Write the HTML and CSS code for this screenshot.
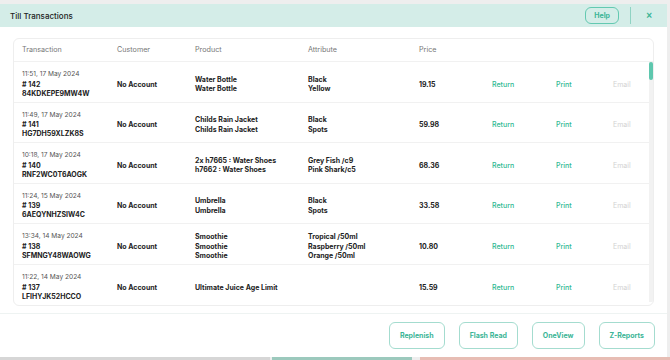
FILE: index.html
```html
<!DOCTYPE html>
<html lang="en">
<head>
    <meta charset="UTF-8">
    <meta name="viewport" content="width=device-width, initial-scale=1.0">
    <title>Till Transactions</title>
    <link rel="stylesheet" href="styles.css">
</head>
<body>
    <div class="modal">
        <header class="modal-header">
            <h1>Till Transactions</h1>
            <div class="header-actions">
                <button class="help-btn">Help</button>
                <span class="divider"></span>
                <button class="close-btn">&times;</button>
            </div>
        </header>

        <div class="modal-body">
            <div class="card">
                <div class="row head">
                    <div>Transaction</div>
                    <div>Customer</div>
                    <div>Product</div>
                    <div>Attribute</div>
                    <div>Price</div>
                    <div></div><div></div><div></div>
                </div>
                <div class="card-body">
                    <div class="rows">
                        <div class="row">
                            <div class="tx"><span class="date">11:51, 17 May 2024</span><b># 142</b><b>84KDKEPE9MW4W</b></div>
                            <div class="bold">No Account</div>
                            <div class="bold">Water Bottle<br>Water Bottle</div>
                            <div class="bold">Black<br>Yellow</div>
                            <div class="bold">19.15</div>
                            <div class="link">Return</div>
                            <div class="link">Print</div>
                            <div class="muted">Email</div>
                        </div>
                        <div class="row">
                            <div class="tx"><span class="date">11:49, 17 May 2024</span><b># 141</b><b>HG7DH59XLZK8S</b></div>
                            <div class="bold">No Account</div>
                            <div class="bold">Childs Rain Jacket<br>Childs Rain Jacket</div>
                            <div class="bold">Black<br>Spots</div>
                            <div class="bold">59.98</div>
                            <div class="link">Return</div>
                            <div class="link">Print</div>
                            <div class="muted">Email</div>
                        </div>
                        <div class="row">
                            <div class="tx"><span class="date">10:18, 17 May 2024</span><b># 140</b><b>RNF2WC0T6AOGK</b></div>
                            <div class="bold">No Account</div>
                            <div class="bold">2x h7665 : Water Shoes<br>h7662 : Water Shoes</div>
                            <div class="bold">Grey Fish /c9<br>Pink Shark/c5</div>
                            <div class="bold">68.36</div>
                            <div class="link">Return</div>
                            <div class="link">Print</div>
                            <div class="muted">Email</div>
                        </div>
                        <div class="row">
                            <div class="tx"><span class="date">11:24, 15 May 2024</span><b># 139</b><b>6AEQYNHZSIW4C</b></div>
                            <div class="bold">No Account</div>
                            <div class="bold">Umbrella<br>Umbrella</div>
                            <div class="bold">Black<br>Spots</div>
                            <div class="bold">33.58</div>
                            <div class="link">Return</div>
                            <div class="link">Print</div>
                            <div class="muted">Email</div>
                        </div>
                        <div class="row">
                            <div class="tx"><span class="date">13:34, 14 May 2024</span><b># 138</b><b>SFMNGY48WAOWG</b></div>
                            <div class="bold">No Account</div>
                            <div class="bold">Smoothie<br>Smoothie<br>Smoothie</div>
                            <div class="bold">Tropical /50ml<br>Raspberry /50ml<br>Orange /50ml</div>
                            <div class="bold">10.80</div>
                            <div class="link">Return</div>
                            <div class="link">Print</div>
                            <div class="muted">Email</div>
                        </div>
                        <div class="row last">
                            <div class="tx"><span class="date">11:22, 14 May 2024</span><b># 137</b><b>LFIHYJK52HCCO</b></div>
                            <div class="bold">No Account</div>
                            <div class="bold">Ultimate Juice Age Limit</div>
                            <div class="bold"></div>
                            <div class="bold">15.59</div>
                            <div class="link">Return</div>
                            <div class="link">Print</div>
                            <div class="muted">Email</div>
                        </div>
                    </div>
                    <div class="scrollbar"><div class="thumb"></div></div>
                </div>
            </div>
        </div>

        <footer class="modal-footer">
            <button class="action-btn">Replenish</button>
            <button class="action-btn">Flash Read</button>
            <button class="action-btn">OneView</button>
            <button class="action-btn">Z-Reports</button>
        </footer>
    </div>

    <div class="backdrop-strip">
        <span class="seg gray"></span>
        <span class="seg teal"></span>
        <span class="seg salmon"></span>
    </div>
</body>
</html>
```

FILE: styles.css
```css
body {
    font-family: Inter, "Open Sans", Arial, sans-serif;
    margin: 0;
    padding: 4px 0 0;
    background-color: #eeeeee;
    color: #222;
    width: 670px;
    height: 360px;
    overflow: hidden;
}

.modal {
    width: 667px;
    background: #fff;
    height: 353px;
    display: flex;
    flex-direction: column;
}

.modal-header {
    height: 23px;
    background: #d4ede8;
    display: flex;
    align-items: center;
    justify-content: space-between;
    padding: 0 10px;
}

.modal-header h1 {
    margin: 0;
    font-size: 8px;
    font-weight: 500;
    color: #222;
}

.header-actions {
    display: flex;
    align-items: center;
}

.help-btn {
    font-family: inherit;
    background: transparent;
    border: 1px solid #63c9b1;
    border-radius: 6px;
    color: #3bb596;
    font-size: 7px;
    font-weight: 700;
    width: 34px;
    height: 17px;
    padding: 0;
}

.divider {
    width: 1px;
    height: 17px;
    background: #8fd3c3;
    margin: 0 15px 0 11px;
}

.close-btn {
    background: transparent;
    border: none;
    color: #3bb596;
    font-size: 10px;
    font-weight: 700;
    padding: 0;
    margin-right: 5px;
}

.modal-body {
    padding: 11px 13px 0;
}

.card {
    border: 1px solid #eeeeee;
    border-radius: 6px;
    height: 266px;
    overflow: hidden;
}

.card-body {
    display: flex;
}

.rows {
    flex: 1;
}

.row {
    display: grid;
    grid-template-columns: 95px 78px 113px 111px 73px 64px 57px 1fr;
    align-items: center;
    padding: 5px 0 0 8px;
    box-sizing: border-box;
    height: 40.5px;
    border-bottom: 1px solid #f1f1f1;
    font-size: 7px;
    line-height: 9.4px;
}

.row.head {
    height: 23px;
    padding-top: 0;
    color: #777;
    font-size: 7.2px;
}

.row.last {
    border-bottom: none;
}

.tx {
    display: flex;
    flex-direction: column;
}

.date {
    color: #555;
    font-size: 6.6px;
}

.bold {
    font-weight: 700;
}

.link {
    color: #2fb892;
    font-weight: 500;
}

.muted {
    color: #d2d2d2;
}

.scrollbar {
    width: 4px;
    background: #f2f2f2;
    height: 240px;
}

.thumb {
    height: 18px;
    background: #5ec7ae;
    border-radius: 2px;
}

.modal-footer {
    margin-top: 7px;
    border-top: 1px solid #eef3f2;
    display: flex;
    justify-content: flex-end;
    gap: 14px;
    padding: 8px 12px 0;
}

.action-btn {
    font-family: inherit;
    background: #fff;
    border: 1px solid #a4dccf;
    border-radius: 6px;
    color: #3bb596;
    font-size: 7px;
    font-weight: 700;
    height: 27px;
    padding: 0 10px;
}

.backdrop-strip {
    display: flex;
    height: 3px;
}

.seg.gray { width: 270px; background: #d6d6d6; }
.seg.teal { width: 140px; background: #9cc9bd; margin-left: 2px; }
.seg.salmon { flex: 1; background: #e7bdb4; margin-left: 8px; }
```
